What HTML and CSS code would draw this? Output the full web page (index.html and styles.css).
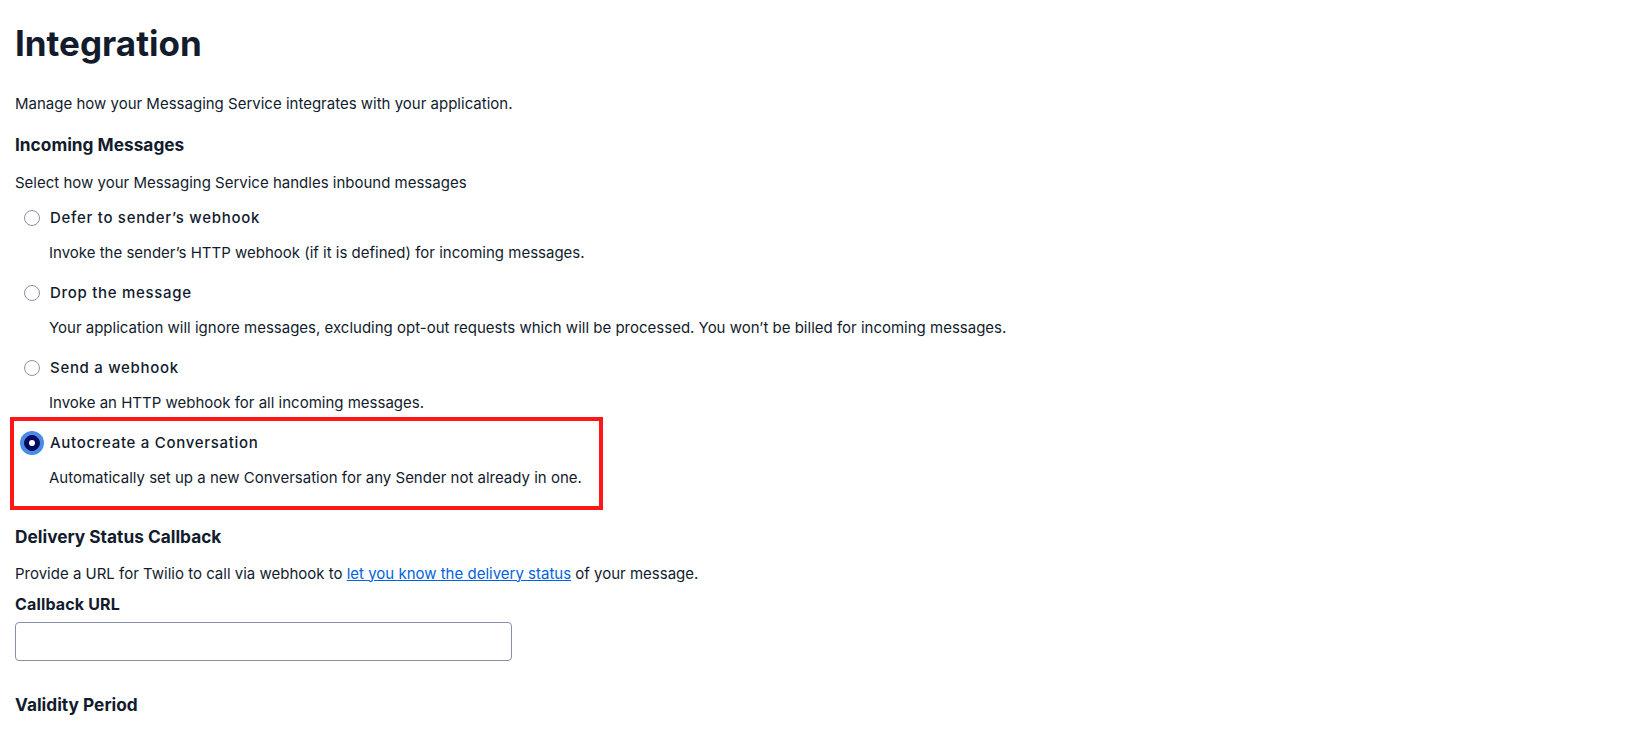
FILE: index.html
```html
<!DOCTYPE html>
<html lang="en">
<head>
<meta charset="utf-8">
<title>Integration</title>
<link rel="stylesheet" href="styles.css">
</head>
<body>
<main class="page">
  <h1 class="title">Integration</h1>
  <p class="intro">Manage how your Messaging Service integrates with your application.</p>

  <section class="section">
    <h2 class="heading">Incoming Messages</h2>
    <p class="help">Select how your Messaging Service handles inbound messages</p>
    <div class="options">
      <div class="option">
        <div class="option-row"><span class="radio"></span><span class="option-label">Defer to sender’s webhook</span></div>
        <p class="option-desc">Invoke the sender’s HTTP webhook (if it is defined) for incoming messages.</p>
      </div>
      <div class="option">
        <div class="option-row"><span class="radio"></span><span class="option-label">Drop the message</span></div>
        <p class="option-desc">Your application will ignore messages, excluding opt-out requests which will be processed. You won’t be billed for incoming messages.</p>
      </div>
      <div class="option">
        <div class="option-row"><span class="radio"></span><span class="option-label">Send a webhook</span></div>
        <p class="option-desc">Invoke an HTTP webhook for all incoming messages.</p>
      </div>
      <div class="option option-highlight">
        <div class="option-row"><span class="radio radio-checked"></span><span class="option-label">Autocreate a Conversation</span></div>
        <p class="option-desc">Automatically set up a new Conversation for any Sender not already in one.</p>
      </div>
    </div>
  </section>

  <section class="section section-delivery">
    <h2 class="heading">Delivery Status Callback</h2>
    <p class="help">Provide a URL for Twilio to call via webhook to <a class="link" href="#">let you know the delivery status</a> of your message.</p>
    <label class="field-label" for="cb">Callback URL</label>
    <input class="text-input" id="cb" type="text">
  </section>

  <section class="section section-validity">
    <h2 class="heading">Validity Period</h2>
  </section>
</main>
</body>
</html>
```
FILE: styles.css
```css
*, *::before, *::after { box-sizing: border-box; }
html, body { margin: 0; padding: 0; background: #ffffff; }
body {
  font-family: Inter, "Noto Sans", "Liberation Sans", sans-serif;
  color: #121c2d;
  font-size: 15px;
  line-height: 20px;
}
.page {
  padding: 23px 15px 0 15px;
  display: flex;
  flex-direction: column;
}
.title {
  margin: 0;
  font-size: 35px;
  line-height: 40px;
  font-weight: 700;
}
.intro { margin: 31px 0 0 0; }
.section { display: flex; flex-direction: column; }
.heading {
  margin: 0;
  font-size: 17.3px;
  line-height: 24px;
  font-weight: 700;
}
.section:first-of-type { margin-top: 19px; }
.help { margin: 16px 0 0 0; }
.options { display: flex; flex-direction: column; margin-top: 15px; }
.option { display: flex; flex-direction: column; padding-bottom: 20.5px; }
.option:last-child { padding-bottom: 0; }
.option-row { display: flex; align-items: center; gap: 10px; height: 20px; padding-left: 9px; }
.radio {
  width: 16px; height: 16px;
  border-radius: 50%;
  border: 1px solid #8891aa;
  background: #fff;
  flex: none;
}
.radio-checked {
  background: #030b5d;
  border-color: #030b5d;
  box-shadow: 0 0 0 4px #4a8be5;
  position: relative;
}
.radio-checked::after {
  content: "";
  position: absolute;
  left: 4px; top: 4px;
  width: 6px; height: 6px;
  border-radius: 50%;
  background: #fff;
}
.option-label {
  font-weight: 500;
  letter-spacing: 0.7px;
  font-size: 15px;
}
.option-desc { margin: 14.5px 0 0 34px; }
.option-highlight { position: relative; }
.option-highlight::before {
  content: "";
  position: absolute;
  left: -5px;
  width: 593px;
  top: -16px; bottom: -22px;
  border: 4px solid #ff1616;
  pointer-events: none;
}
.section-delivery { margin-top: 37px; }
.section-delivery .help { margin-top: 15px; }
.link { color: #0263e0; text-decoration: underline; }
.field-label {
  margin-top: 10px;
  font-weight: 700;
  font-size: 16px;
  line-height: 20px;
  letter-spacing: 0.15px;
}
.text-input {
  margin-top: 8px;
  width: 497px;
  height: 39px;
  border: 1px solid #8891aa;
  border-radius: 4px;
  background: #fff;
  font: inherit;
}
.section-validity { margin-top: 32px; }
```
